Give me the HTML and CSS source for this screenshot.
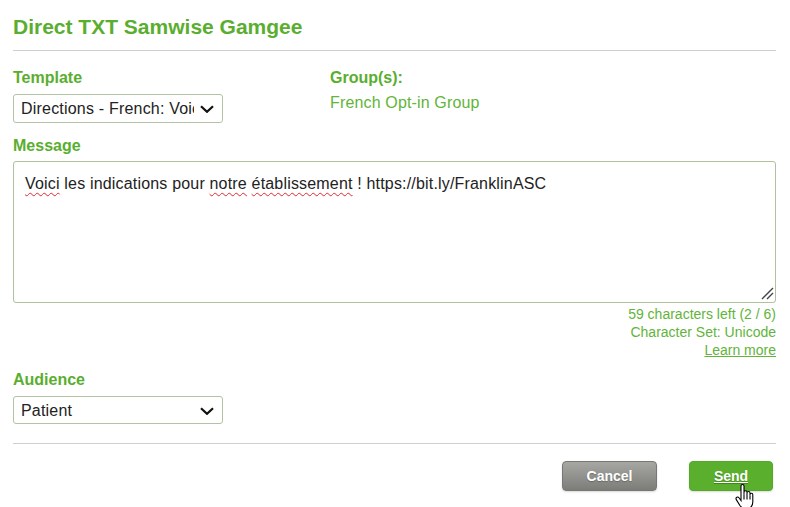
FILE: index.html
```html
<!doctype html>
<html lang="en">
  <head>
    <meta charset="UTF-8" />
    <title>Direct TXT</title>
    <link rel="stylesheet" href="styles.css">
  </head>
  <body>
    <div class="page">
      <header class="title-bar">
        <h1>Direct TXT Samwise Gamgee</h1>
      </header>

      <div class="row-top">
        <div class="field">
          <span class="label">Template</span>
          <div class="select">
            <span class="select-text">Directions - French: Voici les indications</span>
            <svg class="chevron" width="14" height="8" viewBox="0 0 14 8"><path d="M1 1.2l6 5.6 6-5.6" fill="none" stroke="#111" stroke-width="2.2"/></svg>
          </div>
        </div>
        <div class="field">
          <span class="label">Group(s):</span>
          <span class="group-value">French Opt-in Group</span>
        </div>
      </div>

      <div class="field message">
        <span class="label">Message</span>
        <div class="message-box">
          <span class="typo">Voici</span> les indications pour <span class="typo">notre</span> <span class="typo">établissement</span> ! https://bit.ly/FranklinASC
          <svg class="grip" width="13" height="13" viewBox="0 0 13 13"><path d="M12 1L1 12M12 6L6 12" stroke="#444" stroke-width="1.4"/></svg>
        </div>
      </div>

      <div class="msg-info">
        <div>59 characters left (2 / 6)</div>
        <div>Character Set: Unicode</div>
        <div><a href="#">Learn more</a></div>
      </div>

      <div class="field audience">
        <span class="label">Audience</span>
        <div class="select short">
          <span class="select-text">Patient</span>
          <svg class="chevron" width="14" height="8" viewBox="0 0 14 8"><path d="M1 1.2l6 5.6 6-5.6" fill="none" stroke="#111" stroke-width="2.2"/></svg>
        </div>
      </div>

      <div class="actions">
        <button class="btn btn-cancel">Cancel</button>
        <button class="btn btn-send"><span>Send</span></button>
        <svg class="cursor" width="19" height="26" viewBox="0 0 19 26">
          <path d="M6 2a1.5 1.5 0 0 1 3 0v8.5V8.2a1.5 1.5 0 0 1 3 0v2.8V9a1.5 1.5 0 0 1 3 0v2.5-.8a1.4 1.4 0 0 1 2.8 0V18c0 3.5-2.2 6.5-5.5 6.5H9.5c-2 0-3.3-1-4.4-2.7L1.3 15.6c-.6-1-.3-2 .5-2.4.8-.4 1.7-.2 2.2.6L6 16.5Z" fill="#fff" stroke="#000" stroke-width="1.1"/>
          <path d="M9 10.5v5M12 11v4.5M15 11.5v4" stroke="#000" stroke-width="1.1"/>
        </svg>
      </div>
    </div>
  </body>
</html>
```

FILE: styles.css
```css
html {
  overflow: hidden;
}
body {
  font-family: "Liberation Sans", Arial, sans-serif;
  background-color: #fff;
  margin: 0;
  color: #222;
}
.page {
  padding: 0 14px 30px 13px;
}
.title-bar {
  padding: 15px 0 11px;
  border-bottom: 1px solid #cfcfcf;
}
h1 {
  margin: 0;
  font-size: 21px;
  line-height: 24px;
  color: #5aae2f;
}
.row-top {
  display: grid;
  grid-template-columns: 317px 1fr;
  margin-top: 18px;
}
.field {
  display: flex;
  flex-direction: column;
  align-items: flex-start;
}
.label {
  display: block;
  font-size: 16px;
  font-weight: bold;
  line-height: 18px;
  color: #5aae2f;
  margin-bottom: 7px;
}
.group-value {
  font-size: 16px;
  line-height: 18px;
  color: #62b43a;
  letter-spacing: 0.15px;
}
.select {
  box-sizing: border-box;
  width: 210px;
  height: 29px;
  display: flex;
  align-items: center;
  gap: 6px;
  padding: 1px 8px 0 7px;
  border: 1px solid #b2c3a4;
  border-radius: 3px;
  font-size: 16px;
  color: #222;
}
.select.short {
  height: 28px;
}
.select-text {
  flex: 1;
  min-width: 0;
  overflow: hidden;
  white-space: nowrap;
  letter-spacing: 0.2px;
}
.chevron {
  flex: none;
}
.message {
  margin-top: 14px;
  align-items: stretch;
}
.message .label {
  margin-bottom: 6px;
}
.message-box {
  position: relative;
  box-sizing: border-box;
  height: 142px;
  padding: 12px 11px;
  border: 1px solid #adc29d;
  border-radius: 3px;
  font-size: 16px;
  letter-spacing: 0.18px;
  line-height: 20px;
  color: #222;
}
.typo {
  text-decoration: underline wavy #e3262e;
  text-decoration-thickness: 1.3px;
  text-underline-offset: 3px;
}
.grip {
  position: absolute;
  right: 1px;
  bottom: 2px;
}
.msg-info {
  margin-top: 2px;
  text-align: right;
  font-size: 14px;
  line-height: 18px;
  color: #62b43a;
}
.msg-info a {
  color: #62b43a;
}
.audience {
  margin-top: 12px;
}
.actions {
  position: relative;
  display: flex;
  justify-content: flex-end;
  gap: 32px;
  margin-top: 19px;
  padding: 17px 3px 0 0;
  border-top: 1px solid #cfcfcf;
}
.btn {
  height: 30px;
  border-radius: 4px;
  font-family: "Liberation Sans", Arial, sans-serif;
  font-size: 14px;
  font-weight: bold;
  color: #fff;
  cursor: pointer;
  text-shadow: 0 1px 1px rgba(0, 0, 0, 0.25);
  box-shadow: 0 1px 2px rgba(0, 0, 0, 0.15);
}
.btn-cancel {
  width: 95px;
  border: 1px solid #777773;
  background: linear-gradient(#a6a6a2, #7c7c78);
}
.btn-send {
  width: 84px;
  border: 1px solid #55a82a;
  background-color: #5aaf2c;
}
.btn-send span {
  text-decoration: underline;
}
.cursor {
  position: absolute;
  right: 22px;
  top: 40px;
}
```
